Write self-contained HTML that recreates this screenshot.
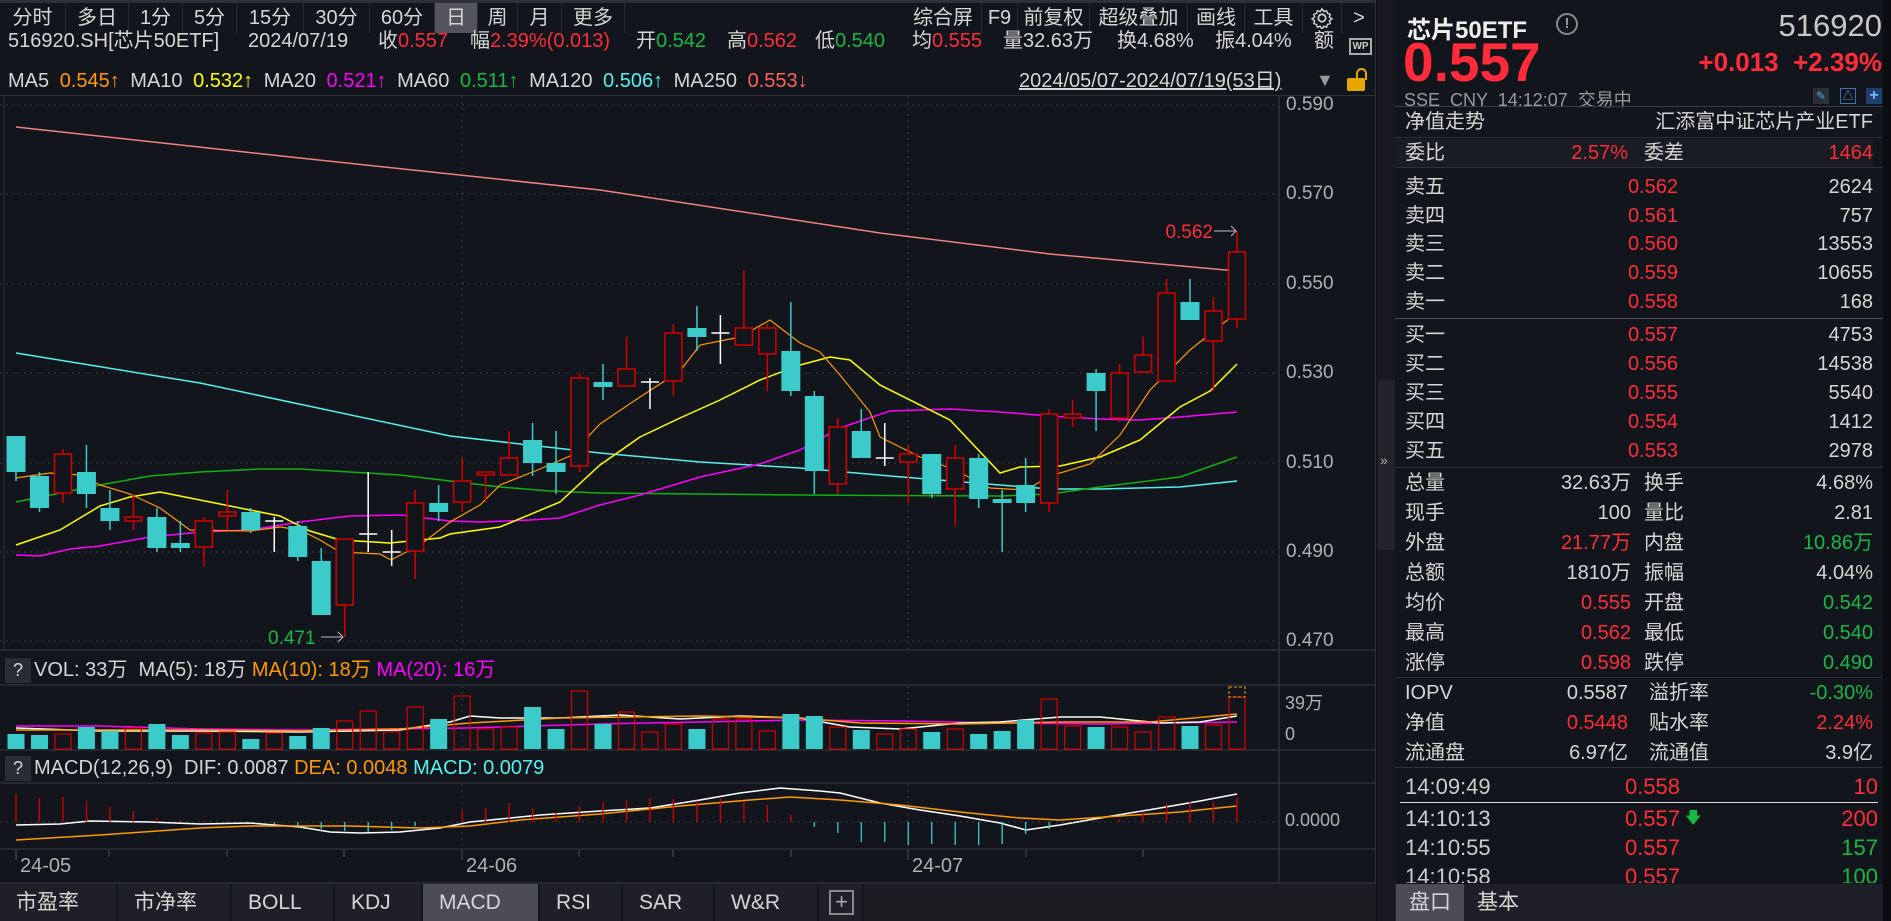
<!DOCTYPE html>
<html><head><meta charset="utf-8">
<style>
*{margin:0;padding:0;box-sizing:border-box}
body{width:1891px;height:921px;overflow:hidden;background:#12151b;font-family:"Liberation Sans","Noto Sans CJK SC",sans-serif;color:#d6d6d6;position:relative}
.a{position:absolute;white-space:nowrap}
.r{color:#ff2b3a}.g{color:#17b845}.o{color:#ff9900}.y{color:#ffff00}.m{color:#ff00ff}.c{color:#55f0f0}.gr{color:#b0b0b0}
.tab{position:absolute;top:3px;height:30px;line-height:30px;font-size:20px;text-align:center;border-right:1px solid #2a2c33}
.row{position:absolute;left:1405px;right:18px;height:29px;font-size:20px;line-height:29px}
.row span{position:absolute}
.btab{position:absolute;top:884px;height:37px;line-height:37px;font-size:21px;padding-left:16px;border-right:2px solid #12151b;background:#1f2027}
.il{position:absolute;top:29px;font-size:20px;line-height:24px;white-space:nowrap}
</style></head><body>
<div class="a" style="left:0;top:0;width:1376px;height:3px;background:#2e3037"></div>
<div class="tab" style="left:0;width:66px">分时</div>
<div class="tab" style="left:66px;width:63px">多日</div>
<div class="tab" style="left:129px;width:54px">1分</div>
<div class="tab" style="left:183px;width:54px">5分</div>
<div class="tab" style="left:237px;width:67px">15分</div>
<div class="tab" style="left:304px;width:66px">30分</div>
<div class="tab" style="left:370px;width:65px">60分</div>
<div class="tab" style="left:435px;width:43px;background:#53545c">日</div>
<div class="tab" style="left:478px;width:40px">周</div>
<div class="tab" style="left:518px;width:44px">月</div>
<div class="tab" style="left:562px;width:63px">更多</div>
<div class="tab" style="left:905px;width:77px">综合屏</div>
<div class="tab" style="left:982px;width:36px">F9</div>
<div class="tab" style="left:1018px;width:72px">前复权</div>
<div class="tab" style="left:1090px;width:98px">超级叠加</div>
<div class="tab" style="left:1188px;width:57px">画线</div>
<div class="tab" style="left:1245px;width:58px">工具</div>
<div class="tab" style="left:1303px;width:39px"><svg width="22" height="22" viewBox="0 0 24 24" style="margin-top:4px"><circle cx="12" cy="12" r="4" fill="none" stroke="#ccc" stroke-width="2"/><path d="M12 2l2 3 3-1 1 3 3 1-1 3 3 2-3 2 1 3-3 1-1 3-3-1-2 3-2-3-3 1-1-3-3-1 1-3-3-2 3-2-1-3 3-1 1-3 3 1z" fill="none" stroke="#ccc" stroke-width="1.6"/></svg></div>
<div class="tab" style="left:1342px;width:34px;border:none">&gt;</div>
<div class="il" style="left:8px">516920.SH[芯片50ETF]</div>
<div class="il" style="left:248px">2024/07/19</div>
<div class="il" style="left:378px">收<span class="r">0.557</span></div>
<div class="il" style="left:470px">幅<span class="r">2.39%(0.013)</span></div>
<div class="il" style="left:636px">开<span class="g">0.542</span></div>
<div class="il" style="left:727px">高<span class="r">0.562</span></div>
<div class="il" style="left:815px">低<span class="g">0.540</span></div>
<div class="il" style="left:912px">均<span class="r">0.555</span></div>
<div class="il" style="left:1003px">量32.63万</div>
<div class="il" style="left:1117px">换4.68%</div>
<div class="il" style="left:1215px">振4.04%</div>
<div class="il" style="left:1314px">额</div>
<div class="a" style="left:1349px;top:38px;width:23px;height:17px;border:2px solid #aaa;font-size:10px;line-height:13px;text-align:center;font-weight:bold;color:#ccc">WP</div>
<div class="a" style="left:8px;top:69px;font-size:20px;line-height:24px;word-spacing:5px">MA5 <span class="o">0.545↑</span> MA10 <span class="y">0.532↑</span> MA20 <span class="m">0.521↑</span> MA60 <span class="g">0.511↑</span> MA120 <span class="c">0.506↑</span> MA250 <span style="color:#ff6060">0.553↓</span></div>
<div class="a" style="left:1019px;top:69px;font-size:20px;line-height:24px;text-decoration:underline">2024/05/07-2024/07/19(53日)</div>
<div class="a" style="left:1316px;top:70px;font-size:18px;color:#999">▼</div>
<div class="a" style="left:1347px;top:78px;width:18px;height:13px;background:#e5a800;border-radius:2px"></div>
<div class="a" style="left:1356px;top:68px;width:11px;height:12px;border:2px solid #e5a800;border-bottom:none;border-radius:6px 6px 0 0"></div>
<div class="a" style="left:0;top:95px;width:1376px;height:1px;background:#2e3037"></div>

<svg class="a" style="left:0;top:0" width="1376" height="921" id="ch">
<g stroke="#3a3c44" stroke-dasharray="2,4" stroke-width="1">
<line x1="0" y1="105" x2="1279" y2="105"/><line x1="0" y1="194" x2="1279" y2="194"/><line x1="0" y1="284" x2="1279" y2="284"/><line x1="0" y1="373" x2="1279" y2="373"/><line x1="0" y1="463" x2="1279" y2="463"/><line x1="0" y1="552" x2="1279" y2="552"/><line x1="0" y1="641" x2="1279" y2="641"/>
<line x1="462" y1="96" x2="462" y2="650"/><line x1="908" y1="96" x2="908" y2="650"/>
<line x1="462" y1="686" x2="462" y2="749"/><line x1="908" y1="686" x2="908" y2="749"/>
<line x1="462" y1="784" x2="462" y2="849"/><line x1="908" y1="784" x2="908" y2="849"/>
<line x1="0" y1="822" x2="1279" y2="822"/>
</g>
<line x1="4" y1="96" x2="4" y2="650" stroke="#2e3037"/>
<line x1="1279" y1="96" x2="1279" y2="883" stroke="#3a3c44"/>
<line x1="1376" y1="0" x2="1376" y2="921" stroke="#2e3037" stroke-width="2"/>
<g stroke="#3a3c44"><line x1="0" y1="650" x2="1376" y2="650"/><line x1="0" y1="685" x2="1376" y2="685"/><line x1="0" y1="750" x2="1376" y2="750"/><line x1="0" y1="783" x2="1376" y2="783"/><line x1="0" y1="849" x2="1376" y2="849"/><line x1="0" y1="883" x2="1376" y2="883"/></g>
<g stroke="#555" ><line x1="16" y1="850" x2="16" y2="860"/><line x1="109" y1="850" x2="109" y2="857"/><line x1="227" y1="850" x2="227" y2="857"/><line x1="344" y1="850" x2="344" y2="857"/><line x1="462" y1="850" x2="462" y2="860"/><line x1="579" y1="850" x2="579" y2="857"/><line x1="673" y1="850" x2="673" y2="857"/><line x1="791" y1="850" x2="791" y2="857"/><line x1="908" y1="850" x2="908" y2="860"/><line x1="1026" y1="850" x2="1026" y2="857"/><line x1="1143" y1="850" x2="1143" y2="857"/></g>
<g id="lines" fill="none"></g>
<g id="cd"></g>
<text x="1213" y="238" fill="#ff2b3a" font-size="19" text-anchor="end" font-family="Liberation Sans">0.562</text>
<path d="M1214 231h22m-5-5l5 5-5 5" stroke="#bbb" fill="none"/>
<text x="268" y="644" fill="#17b845" font-size="19" font-family="Liberation Sans">0.471</text>
<path d="M321 637h22m-5-5l5 5-5 5" stroke="#bbb" fill="none"/>
<rect x="1229" y="687" width="16" height="10" fill="none" stroke="#e5a800" stroke-dasharray="3,2"/>
</svg>
<div class="a gr" style="left:1286px;top:94px;font-size:19px">0.590</div>
<div class="a gr" style="left:1286px;top:183px;font-size:19px">0.570</div>
<div class="a gr" style="left:1286px;top:273px;font-size:19px">0.550</div>
<div class="a gr" style="left:1286px;top:362px;font-size:19px">0.530</div>
<div class="a gr" style="left:1286px;top:452px;font-size:19px">0.510</div>
<div class="a gr" style="left:1286px;top:541px;font-size:19px">0.490</div>
<div class="a gr" style="left:1286px;top:630px;font-size:19px">0.470</div>
<div class="a gr" style="left:1285px;top:689px;font-size:18px">39万</div>
<div class="a gr" style="left:1285px;top:724px;font-size:18px">0</div>
<div class="a gr" style="left:1285px;top:810px;font-size:18px">0.0000</div>
<div class="a" style="left:5px;top:658px;width:26px;height:25px;background:#2a2c33;font-size:18px;line-height:25px;text-align:center">?</div>
<div class="a" style="left:34px;top:657px;font-size:20px;line-height:26px">VOL: 33万 &nbsp;MA(5): 18万 <span class="o">MA(10): 18万</span> <span class="m">MA(20): 16万</span></div>
<div class="a" style="left:5px;top:756px;width:26px;height:25px;background:#2a2c33;font-size:18px;line-height:25px;text-align:center">?</div>
<div class="a" style="left:34px;top:755px;font-size:20px;line-height:26px">MACD(12,26,9) &nbsp;DIF: 0.0087 <span class="o">DEA: 0.0048</span> <span class="c">MACD: 0.0079</span></div>
<div class="a gr" style="left:20px;top:855px;font-size:20px">24-05</div>
<div class="a gr" style="left:466px;top:855px;font-size:20px">24-06</div>
<div class="a gr" style="left:912px;top:855px;font-size:20px">24-07</div>
<div class="a" style="left:0;top:884px;width:1376px;height:37px;background:#1c1d23"></div>
<div class="btab" style="left:0;width:118px">市盈率</div>
<div class="btab" style="left:118px;width:114px">市净率</div>
<div class="btab" style="left:232px;width:103px">BOLL</div>
<div class="btab" style="left:335px;width:88px">KDJ</div>
<div class="btab" style="left:423px;width:117px;background:#4b4c56">MACD</div>
<div class="btab" style="left:540px;width:83px">RSI</div>
<div class="btab" style="left:623px;width:92px">SAR</div>
<div class="btab" style="left:715px;width:104px">W&amp;R</div>
<div class="btab" style="left:819px;width:45px;padding:0"><div style="position:absolute;left:10px;top:6px;width:25px;height:25px;border:2px solid #888;color:#aaa;font-size:22px;line-height:20px;text-align:center">+</div></div>
<div class="a" style="left:1378px;top:0;width:17px;height:921px;background:#17191f"></div>
<div class="a" style="left:1378px;top:380px;width:17px;height:170px;background:#22242a"></div>
<div class="a gr" style="left:1380px;top:452px;font-size:14px">»</div>
<div class="a" style="left:1407px;top:10px;font-size:24px;font-weight:bold;color:#eee">芯片50ETF</div>
<div class="a" style="left:1556px;top:13px;width:22px;height:22px;border:2px solid #888;border-radius:50%;font-size:15px;line-height:18px;text-align:center;color:#999;font-weight:bold">!</div>
<div class="a" style="right:9px;top:8px;font-size:31px;color:#c8c8c8">516920</div>
<div class="a r" style="left:1403px;top:34px;font-size:55px;font-weight:bold;line-height:56px">0.557</div>
<div class="a r" style="right:9px;top:47px;font-size:26px;font-weight:bold">+0.013 &nbsp;+2.39%</div>
<div class="a" style="left:1404px;top:86px;font-size:18px;color:#999">SSE &nbsp;CNY &nbsp;14:12:07 &nbsp;交易中</div>
<div class="a" style="left:1813px;top:88px;width:16px;height:16px;background:#2a2f38;color:#4ac;font-size:12px;line-height:16px;text-align:center">✎</div>
<div class="a" style="left:1840px;top:88px;width:16px;height:16px;border:1px solid #3a6fb0;color:#6af;font-size:11px;line-height:14px;text-align:center">△</div>
<div class="a" style="left:1866px;top:88px;width:16px;height:16px;background:#1f3f70;color:#7bf;font-size:16px;line-height:15px;text-align:center;font-weight:bold">+</div>
<div class="a" style="left:1395px;top:106px;width:488px;height:1px;background:#3a3c44"></div>
<div class="row" style="top:108px"><span style="left:0">净值走势</span><span style="right:0">汇添富中证芯片产业ETF</span></div>
<div class="a" style="left:1395px;top:137px;width:488px;height:1px;background:#2e3037"></div>
<div class="row" style="top:139px;background:#191c22;left:1395px;padding-left:10px"><span style="left:10px">委比</span><span class="r" style="right:245px">2.57%</span><span style="left:249px">委差</span><span class="r" style="right:0">1464</span></div>
<div class="a" style="left:1395px;top:167px;width:488px;height:1px;background:#2e3037"></div>
<div class="row" style="top:173px"><span>卖五</span><span class="r" style="right:195px">0.562</span><span style="right:0">2624</span></div>
<div class="row" style="top:202px"><span>卖四</span><span class="r" style="right:195px">0.561</span><span style="right:0">757</span></div>
<div class="row" style="top:230px"><span>卖三</span><span class="r" style="right:195px">0.560</span><span style="right:0">13553</span></div>
<div class="row" style="top:259px"><span>卖二</span><span class="r" style="right:195px">0.559</span><span style="right:0">10655</span></div>
<div class="row" style="top:288px"><span>卖一</span><span class="r" style="right:195px">0.558</span><span style="right:0">168</span></div>
<div class="a" style="left:1395px;top:318px;width:488px;height:1px;background:#4a4c54"></div>
<div class="row" style="top:321px"><span>买一</span><span class="r" style="right:195px">0.557</span><span style="right:0">4753</span></div>
<div class="row" style="top:350px"><span>买二</span><span class="r" style="right:195px">0.556</span><span style="right:0">14538</span></div>
<div class="row" style="top:379px"><span>买三</span><span class="r" style="right:195px">0.555</span><span style="right:0">5540</span></div>
<div class="row" style="top:408px"><span>买四</span><span class="r" style="right:195px">0.554</span><span style="right:0">1412</span></div>
<div class="row" style="top:437px"><span>买五</span><span class="r" style="right:195px">0.553</span><span style="right:0">2978</span></div>
<div class="a" style="left:1395px;top:467px;width:488px;height:1px;background:#2e3037"></div>
<div class="row" style="top:469px"><span>总量</span><span style="right:242px">32.63万</span><span style="left:239px">换手</span><span style="right:0">4.68%</span></div>
<div class="row" style="top:499px"><span>现手</span><span style="right:242px">100</span><span style="left:239px">量比</span><span style="right:0">2.81</span></div>
<div class="row" style="top:529px"><span>外盘</span><span class="r" style="right:242px">21.77万</span><span style="left:239px">内盘</span><span class="g" style="right:0">10.86万</span></div>
<div class="row" style="top:559px"><span>总额</span><span style="right:242px">1810万</span><span style="left:239px">振幅</span><span style="right:0">4.04%</span></div>
<div class="row" style="top:589px"><span>均价</span><span class="r" style="right:242px">0.555</span><span style="left:239px">开盘</span><span class="g" style="right:0">0.542</span></div>
<div class="row" style="top:619px"><span>最高</span><span class="r" style="right:242px">0.562</span><span style="left:239px">最低</span><span class="g" style="right:0">0.540</span></div>
<div class="row" style="top:649px"><span>涨停</span><span class="r" style="right:242px">0.598</span><span style="left:239px">跌停</span><span class="g" style="right:0">0.490</span></div>
<div class="a" style="left:1395px;top:677px;width:488px;height:1px;background:#2e3037"></div>
<div class="row" style="top:679px"><span>IOPV</span><span style="right:245px">0.5587</span><span style="left:244px">溢折率</span><span class="g" style="right:0">-0.30%</span></div>
<div class="row" style="top:709px"><span>净值</span><span class="r" style="right:245px">0.5448</span><span style="left:244px">贴水率</span><span class="r" style="right:0">2.24%</span></div>
<div class="row" style="top:739px"><span>流通盘</span><span style="right:245px">6.97亿</span><span style="left:244px">流通值</span><span style="right:0">3.9亿</span></div>
<div class="a" style="left:1395px;top:767px;width:488px;height:1px;background:#2e3037"></div>
<div style="position:absolute;left:1395px;top:770px;width:488px;height:113px;overflow:hidden">
<div class="a" style="left:10px;top:4px;font-size:22px;color:#ccc">14:09:49</div><div class="a r" style="right:203px;top:4px;font-size:22px">0.558</div><div class="a r" style="right:5px;top:4px;font-size:22px">10</div>
<div class="a" style="left:5px;top:32px;width:478px;height:1px;background:#ddd"></div>
<div class="a" style="left:10px;top:36px;font-size:22px;color:#ccc">14:10:13</div><div class="a r" style="right:203px;top:36px;font-size:22px">0.557</div><div class="a g" style="left:290px;top:37px;font-size:16px">🡇</div><div class="a r" style="right:5px;top:36px;font-size:22px">200</div>
<div class="a" style="left:10px;top:65px;font-size:22px;color:#ccc">14:10:55</div><div class="a r" style="right:203px;top:65px;font-size:22px">0.557</div><div class="a g" style="right:5px;top:65px;font-size:22px">157</div>
<div class="a" style="left:10px;top:94px;font-size:22px;color:#ccc">14:10:58</div><div class="a r" style="right:203px;top:94px;font-size:22px">0.557</div><div class="a g" style="right:5px;top:94px;font-size:22px">100</div>
</div>
<div class="a" style="left:1395px;top:884px;width:488px;height:37px;background:#1f2027"></div>
<div class="a" style="left:1396px;top:884px;width:68px;height:37px;background:#4b4c56;font-size:21px;line-height:37px;text-align:center">盘口</div>
<div class="a" style="left:1477px;top:884px;font-size:21px;line-height:37px">基本</div>
<div class="a" style="left:1883px;top:0;width:8px;height:921px;background:#0c0d10"></div>
<script>
var X=function(i){return 16+23.48*i};
var C=[[436,472,436,481,'c'],[476,508,472,512,'c'],[454,493,449,503,'r'],[472,494,445,508,'c'],[508,521,490,530,'c'],[517,521,494,530,'r'],[517,548,508,552,'c'],[543,548,521,552,'c'],[521,547,517,566,'r'],[512,516,490,530,'r'],[512,530,508,533,'c'],[521,521,517,552,'w'],[526,557,521,561,'c'],[561,615,548,615,'c'],[539,605,539,637,'r'],[534,534,472,552,'w'],[552,552,530,566,'w'],[503,551,490,579,'r'],[503,512,485,521,'c'],
[481,502,458,512,'r'],[472,475,472,502,'r'],[458,475,431,475,'r'],[440,463,423,476,'c'],[463,472,431,494,'c'],[378,466,373,472,'r'],[382,387,364,400,'c'],[369,386,337,386,'r'],[382,382,378,409,'w'],[333,381,324,396,'r'],[328,337,306,351,'c'],[333,333,315,364,'w'],[328,345,270,345,'r'],[328,354,324,391,'r'],[351,391,302,396,'c'],[396,471,391,494,'c'],[427,484,418,494,'r'],[431,458,409,458,'c'],[458,458,423,466,'w'],
[454,462,445,503,'r'],[454,494,454,498,'c'],[458,489,445,526,'r'],[458,499,454,508,'c'],[499,503,490,552,'c'],[485,503,458,512,'c'],[414,503,409,512,'r'],[414,418,400,427,'r'],[373,391,369,431,'c'],[373,418,364,422,'r'],[355,372,337,372,'r'],[293,381,279,381,'r'],[302,320,279,320,'c'],[311,341,297,391,'r'],[252,319,231,328,'r']];
var V=[734,735,734,727,731,728,724,735,733,732,739,733,736,728,721,711,732,707,719,696,729,727,707,729,691,724,712,732,724,729,719,719,731,714,716,727,730,734,729,732,729,734,731,720,699,726,727,727,732,717,726,725,697];
var M=[794,798,797,801,807,811,818,820,821,821,823,824,826,829,831,832,830,826,821,811,808,803,808,812,806,802,800,798,799,801,798,801,805,815,827,833,842,842,845,844,845,845,844,834,829,823,821,819,812,804,802,802,798];
var s='';
C.forEach(function(d,i){var x=X(i),col=d[4]=='r'?'#d70000':d[4]=='c'?'#3ccbcb':'#ffffff';
s+='<line x1="'+x+'" y1="'+d[2]+'" x2="'+x+'" y2="'+d[3]+'" stroke="'+col+'" stroke-width="1.5"/>';
if(d[4]=='w')s+='<line x1="'+(x-9)+'" y1="'+d[0]+'" x2="'+(x+9)+'" y2="'+d[0]+'" stroke="#fff" stroke-width="1.5"/>';
else if(d[4]=='r')s+='<rect x="'+(x-8.5)+'" y="'+d[0]+'" width="17" height="'+Math.max(d[1]-d[0],2)+'" fill="#12151b" stroke="#d70000" stroke-width="1.5"/>';
else s+='<rect x="'+(x-9.5)+'" y="'+d[0]+'" width="19" height="'+Math.max(d[1]-d[0],2)+'" fill="#3ccbcb"/>';
var vc=d[4]=='c';var h=749-V[i];
s+=vc?'<rect x="'+(x-8.5)+'" y="'+V[i]+'" width="17" height="'+h+'" fill="#3ccbcb"/>':'<rect x="'+(x-8)+'" y="'+V[i]+'" width="16" height="'+h+'" fill="none" stroke="#d70000" stroke-width="1.2"/>';
var mc=M[i]>822?'#3ccbcb':'#d70000';s+='<line x1="'+x+'" y1="822" x2="'+x+'" y2="'+M[i]+'" stroke="'+mc+'" stroke-width="1.3"/>';
});
document.getElementById('cd').innerHTML=s;
function pl(p,c,w){return '<polyline points="'+p+'" stroke="'+c+'" stroke-width="'+(w||1.5)+'"/>'}
var L='';
L+=pl('16,127 300,158 600,190 880,233 1050,254 1237,271','#f08080');
L+=pl('16,353 200,383 450,436 600,453 700,462 800,468 890,476 1000,485 1050,489 1100,489 1180,487 1237,481','#55f0f0');
L+=pl('16,502 100,485 150,476 200,472 260,469 300,469 350,472 400,475 450,481 500,487 550,491 600,493 700,494 800,495 1000,496 1050,494 1100,487 1180,477 1237,457','#10b010');
L+=pl('16,555 40,556 70,549 100,546 150,537 200,532 250,530 300,522 350,516 400,515 450,521 480,522 530,520 560,518 600,505 640,495 700,477 760,464 800,450 840,428 890,411 950,409 1000,412 1050,416 1100,419 1140,420 1180,417 1237,412','#ff00ff');
L+=pl('16,545 60,530 100,506 130,497 160,492 200,500 250,510 280,516 310,531 340,540 390,543 440,538 450,534 500,527 560,502 600,465 640,437 680,418 720,400 760,380 800,365 830,357 850,360 880,385 950,420 1000,473 1020,467 1060,466 1100,457 1140,440 1180,407 1210,391 1237,364','#ffff00');
L+=pl('16,478 50,473 80,475 100,485 130,494 160,508 190,530 250,531 280,527 300,530 320,540 340,552 380,554 391,560 420,545 450,522 480,505 500,485 540,469 570,456 600,424 640,397 680,371 700,345 740,337 770,320 800,343 820,352 840,375 870,412 880,437 920,457 955,470 990,488 1026,490 1050,476 1090,464 1120,435 1150,390 1190,350 1230,318 1237,307','#ff9900',1.2);
L+=pl('16,726 100,726 200,729 300,730 466,728 600,724 700,722 800,720 900,721 1000,723 1100,724 1237,722','#ff00ff');
L+=pl('16,728 100,731 200,731 300,732 400,730 450,722 470,716 500,718 560,718 620,715 680,719 740,716 800,718 850,727 900,729 960,723 1000,722 1060,717 1100,717 1160,723 1200,722 1237,716','#ffffff');
L+=pl('16,730 200,730 300,731 400,729 470,723 560,718 700,716 800,718 860,723 960,724 1060,722 1150,722 1237,714','#ff9900');
L+=pl('16,825 60,824 90,821 150,822 200,824 250,823 300,827 330,832 360,833 400,832 440,828 470,822 500,819 540,815 600,811 650,808 700,800 740,793 780,788 820,791 840,793 880,803 920,810 960,816 1000,823 1026,830 1060,825 1100,818 1160,808 1200,801 1237,794','#ffffff');
L+=pl('16,840 100,835 200,828 250,826 350,826 420,828 470,826 520,820 600,814 680,806 750,800 790,797 840,800 900,805 960,812 1020,818 1060,820 1120,816 1180,812 1237,806','#ff9900');
document.getElementById('lines').innerHTML=L;
</script>
</body></html>
